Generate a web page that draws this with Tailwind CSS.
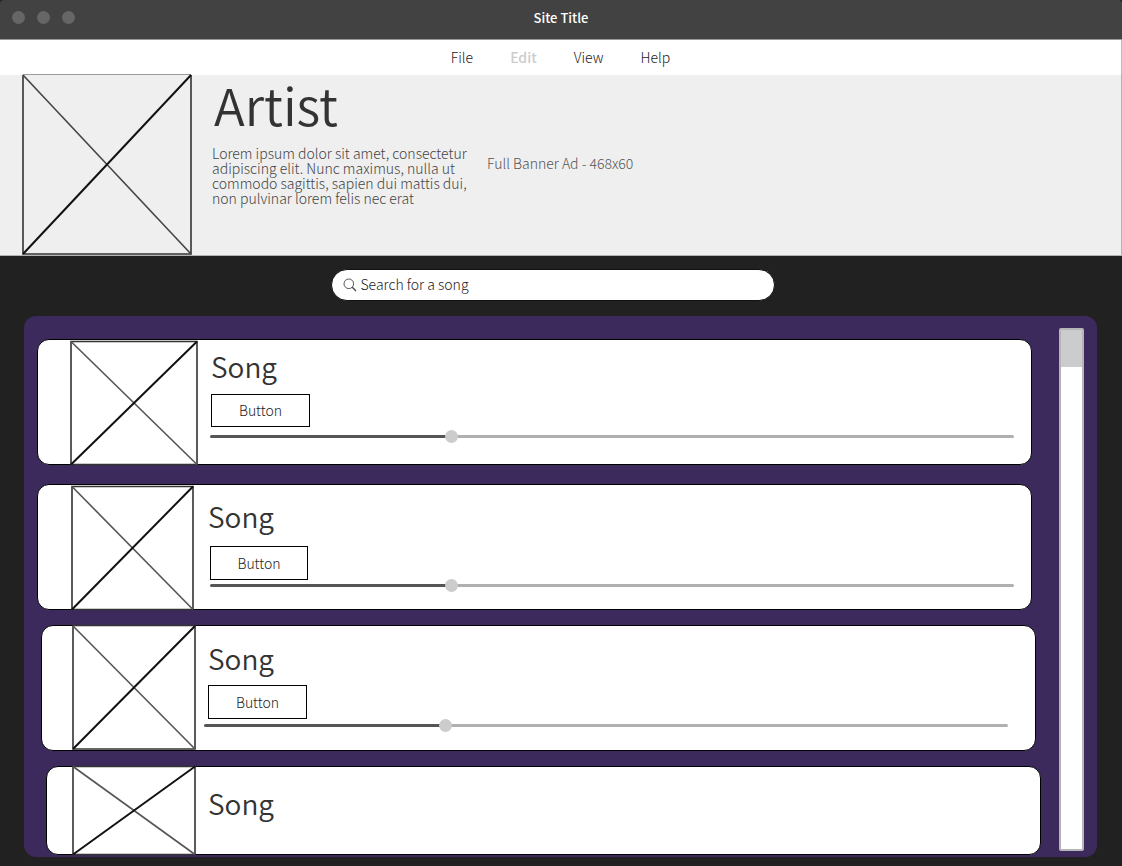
<!DOCTYPE html>
<html lang="en">
<head>
<meta charset="utf-8">
<meta name="viewport" content="width=device-width, initial-scale=1">
<title>Site Title</title>
<script src="https://cdn.jsdelivr.net/npm/@tailwindcss/browser@4"></script>
</head>
<body class="flex min-h-screen flex-col bg-[#212121] font-['Noto_Sans_CJK_SC',sans-serif] text-sm font-light text-[#222222]">
  <header>
    <div class="relative flex h-10 items-center justify-center rounded-t-sm border-b border-[#999999] bg-[#424242] pb-[3px]">
      <div class="absolute left-3 top-[11px] flex gap-3" aria-hidden="true">
        <span class="size-[13px] rounded-full bg-[#666666]"></span>
        <span class="size-[13px] rounded-full bg-[#666666]"></span>
        <span class="size-[13px] rounded-full bg-[#666666]"></span>
      </div>
      <h1 class="text-[13px] leading-5 font-medium text-white">Site Title</h1>
    </div>
    <nav class="flex h-[35px] items-center justify-center gap-[37px] border-r border-[#bbbbbb] bg-white pb-[2px]">
      <a href="#file">File</a>
      <a href="#edit" class="font-medium text-[#cccccc]" aria-disabled="true">Edit</a>
      <a href="#view">View</a>
      <a href="#help">Help</a>
    </nav>
    <section class="flex h-[181px] items-start border-r border-b border-[#b0b5b3] bg-[#efefef] pl-[22px]">
      <svg class="-mt-px h-[181px] w-[170px] shrink-0" viewBox="0 0 170 181" fill="none" role="img" aria-label="Artist image">
        <path d="M1 .5H169" stroke="#999"/>
        <path d="M1 1V180H169V1" stroke="#333" stroke-width="1.6"/>
        <path d="M1 1L169 180" stroke="#444" stroke-width="1.6"/>
        <path d="M169 1L1 180" stroke="#111" stroke-width="2"/>
      </svg>
      <div class="w-[295px] shrink-0 pl-5">
        <h2 class="pl-0.5 text-[51px] leading-[58px] font-[350] text-[#333333]">Artist</h2>
        <p class="mt-[13px] w-[264px] leading-[15px] text-[#444444]">Lorem ipsum dolor sit amet, consectetur adipiscing elit. Nunc maximus, nulla ut commodo sagittis, sapien dui mattis dui, non pulvinar lorem felis nec erat</p>
      </div>
      <p class="flex h-[176px] items-center text-[#555555]">Full Banner Ad - 468x60</p>
    </section>
  </header>
  <main class="flex grow flex-col pt-[13px] pr-[25px] pb-[9px] pl-6">
    <form class="mr-4 flex justify-center" role="search">
      <label class="flex h-8 w-full max-w-[444px] items-center gap-1 rounded-full border border-[#111111] bg-white pl-[11px]">
        <svg class="size-[14px] shrink-0" viewBox="0 0 14 14" fill="none" stroke="#444"><circle cx="5.8" cy="5.8" r="4.8" stroke-width=".9"/><path d="M9.3 9.3L13 13" stroke-width="1.3"/></svg>
        <input type="search" aria-label="Search for a song" placeholder="Search for a song" class="w-full bg-transparent pb-[3px] placeholder:text-[#222222] focus:outline-none">
      </label>
    </form>
    <section class="mt-[15px] flex grow gap-[18px] rounded-xl bg-[#3d2a5c] pt-3 pr-[13px] pb-0.5 pl-[13px]">
      <div id="songs" class="flex grow flex-col pt-[11px]">
        <article class="mr-[9px] flex h-[126px] rounded-xl border border-black bg-white pl-8">
          <svg class="h-[126px] w-32 shrink-0 overflow-visible" viewBox="0 0 128 126" fill="none" role="img" aria-label="Song image">
            <path d="M1 1.5H127V124.5H1Z" stroke="#333" stroke-width="1.6"/>
            <path d="M1 1.5L127 124.5" stroke="#555" stroke-width="1.6"/>
            <path d="M127 1.5L1 124.5" stroke="#111" stroke-width="2"/>
          </svg>
          <div class="flex grow flex-col items-start pt-[6px] pr-[17px] pl-3">
            <h3 class="ml-px text-[28px] leading-10 font-[350] text-[#333333]">Song</h3>
            <button type="button" class="mt-2 ml-px h-[33px] w-[99px] border border-black pb-px">Button</button>
            <input type="range" max="1000" value="297" aria-label="Song position" class="mt-[3px] h-[13px] w-full appearance-none bg-transparent [&::-webkit-slider-runnable-track]:h-[3px] [&::-webkit-slider-runnable-track]:rounded-full [&::-webkit-slider-runnable-track]:bg-[linear-gradient(to_right,#555555_30%,#b0b0b0_30%)] [&::-webkit-slider-thumb]:-mt-[5px] [&::-webkit-slider-thumb]:size-[13px] [&::-webkit-slider-thumb]:appearance-none [&::-webkit-slider-thumb]:rounded-full [&::-webkit-slider-thumb]:bg-[#cccccc]">
          </div>
        </article>
        <article class="mt-[19px] mr-[9px] flex h-[126px] rounded-xl border border-black bg-white pl-[33px]">
          <svg class="h-[126px] w-[123px] shrink-0 overflow-visible" viewBox="0 0 123 126" fill="none" role="img" aria-label="Song image">
            <path d="M1 1.5H122V124.5H1Z" stroke="#333" stroke-width="1.6"/>
            <path d="M1 1.5L122 124.5" stroke="#555" stroke-width="1.6"/>
            <path d="M122 1.5L1 124.5" stroke="#111" stroke-width="2"/>
          </svg>
          <div class="flex grow flex-col items-start pt-[11px] pr-[17px] pl-4">
            <h3 class="-ml-0.5 text-[28px] leading-10 font-[350] text-[#333333]">Song</h3>
            <button type="button" class="mt-[10px] h-[34px] w-[98px] border border-black pb-px">Button</button>
            <input type="range" max="1000" value="297" aria-label="Song position" class="-mt-px h-[13px] w-full appearance-none bg-transparent [&::-webkit-slider-runnable-track]:h-[3px] [&::-webkit-slider-runnable-track]:rounded-full [&::-webkit-slider-runnable-track]:bg-[linear-gradient(to_right,#555555_30%,#b0b0b0_30%)] [&::-webkit-slider-thumb]:-mt-[5px] [&::-webkit-slider-thumb]:size-[13px] [&::-webkit-slider-thumb]:appearance-none [&::-webkit-slider-thumb]:rounded-full [&::-webkit-slider-thumb]:bg-[#cccccc]">
          </div>
        </article>
        <article class="mt-[15px] mr-[5px] ml-1 flex h-[126px] rounded-xl border border-black bg-white pl-[30px]">
          <svg class="-mt-px h-[126px] w-[124px] shrink-0 overflow-visible" viewBox="0 0 124 126" fill="none" role="img" aria-label="Song image">
            <path d="M1 .5H123V124H1Z" stroke="#333" stroke-width="1.6"/>
            <path d="M1 1L123 124" stroke="#555" stroke-width="1.6"/>
            <path d="M123 1L1 124" stroke="#111" stroke-width="2"/>
          </svg>
          <div class="flex grow flex-col items-start pt-3 pr-[27px] pl-2">
            <h3 class="ml-1 text-[28px] leading-10 font-[350] text-[#333333]">Song</h3>
            <button type="button" class="mt-[7px] ml-1 h-[34px] w-[99px] border border-black pb-px">Button</button>
            <input type="range" max="1000" value="297" aria-label="Song position" class="h-[13px] w-full appearance-none bg-transparent [&::-webkit-slider-runnable-track]:h-[3px] [&::-webkit-slider-runnable-track]:rounded-full [&::-webkit-slider-runnable-track]:bg-[linear-gradient(to_right,#555555_30%,#b0b0b0_30%)] [&::-webkit-slider-thumb]:-mt-[5px] [&::-webkit-slider-thumb]:size-[13px] [&::-webkit-slider-thumb]:appearance-none [&::-webkit-slider-thumb]:rounded-full [&::-webkit-slider-thumb]:bg-[#cccccc]">
          </div>
        </article>
        <article class="mt-[15px] ml-[9px] flex h-[89px] rounded-xl border border-black bg-white pl-[25px]">
          <svg class="-mt-px h-[90px] w-[124px] shrink-0 overflow-visible" viewBox="0 0 124 90" fill="none" role="img" aria-label="Song image">
            <path d="M1 .5H123V88.5H1Z" stroke="#333" stroke-width="1.6"/>
            <path d="M1 .5L123 88.5" stroke="#555" stroke-width="1.6"/>
            <path d="M123 .5L1 88.5" stroke="#111" stroke-width="2"/>
          </svg>
          <div class="pt-4 pl-3">
            <h3 class="text-[28px] leading-10 font-[350] text-[#333333]">Song</h3>
          </div>
        </article>
      </div>
      <div class="mb-1 w-[25px] shrink-0 rounded-xs border-2 border-[#b5b5b5] bg-white" role="scrollbar" aria-label="Song list" aria-orientation="vertical" aria-valuenow="0" aria-controls="songs">
        <div class="h-[37px] bg-[#cccccc]"></div>
      </div>
    </section>
  </main>
</body>
</html>
